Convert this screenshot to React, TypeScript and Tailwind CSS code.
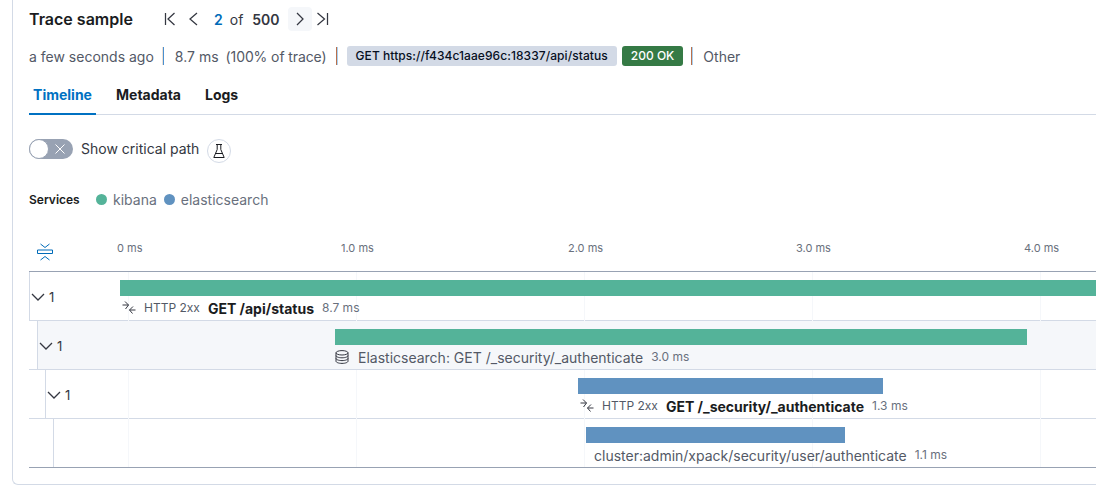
const gridLines = ["left-[99px]", "left-[327px]", "left-[555px]", "left-[783px]", "left-[1011px]"];

const ticks = [
  { label: "0 ms", className: "left-[88px]" },
  { label: "1.0 ms", className: "left-[312px]" },
  { label: "2.0 ms", className: "left-[539px]" },
  { label: "3.0 ms", className: "left-[767px]" },
  { label: "4.0 ms", className: "left-[995px]" },
];

function Icon({ children, className }: { children: React.ReactNode; className?: string }) {
  return (
    <svg viewBox="0 0 16 16" fill="none" stroke="currentColor" strokeWidth="1.25" className={className}>
      {children}
    </svg>
  );
}

function Chevron() {
  return (
    <svg viewBox="0 0 16 10" fill="none" stroke="#343741" strokeWidth="1.3" className="h-[10px] w-[16px] shrink-0">
      <path d="M2 2l6 6 6-6" />
    </svg>
  );
}

function ExitIcon() {
  return (
    <svg viewBox="0 0 14 14" fill="none" stroke="#343741" strokeWidth="1" className="h-[14px] w-[14px] shrink-0">
      <path d="M0.5 4H6.5M3 0.5L6.5 4L3.5 8M13.5 9H7.5M11 5.5L7.5 9L10.5 12.5" />
    </svg>
  );
}

function DatabaseIcon() {
  return (
    <svg viewBox="0 0 14 14" fill="none" stroke="#343741" strokeWidth="1" className="h-[14px] w-[14px] shrink-0">
      <ellipse cx="7" cy="2.8" rx="6" ry="2.2" />
      <path d="M1 2.8v8.4c0 1.2 2.7 2.2 6 2.2s6-1 6-2.2V2.8M1 5.6c0 1.2 2.7 2.2 6 2.2s6-1 6-2.2M1 8.4c0 1.2 2.7 2.2 6 2.2s6-1 6-2.2" />
    </svg>
  );
}

function Row({
  indent,
  tint,
  count,
  barClass,
  children,
}: {
  indent: string;
  tint?: boolean;
  count?: boolean;
  barClass: string;
  children: React.ReactNode;
}) {
  return (
    <div className={`h-[49px] border-b border-[#d3dae6] ${indent}`}>
      <div className={`flex h-full border-l border-[#d3dae6] ${tint ? "bg-[#f5f7fa]" : ""}`}>
        <div className="relative z-10 min-w-0 flex-1">
          {count && (
            <div className="absolute left-0 top-[17px] flex items-center gap-[3px] text-[13px] leading-[16px] text-[#343741]">
              <Chevron />
              <span>1</span>
            </div>
          )}
          <div className={`mt-[8px] h-[16px] ${barClass}`} />
          {children}
        </div>
      </div>
    </div>
  );
}

export default function App() {
  return (
    <div className="h-[489px] w-[1096px] overflow-hidden bg-white font-['Inter','Liberation_Sans',sans-serif] text-[#343741]">
      <div className="ml-[12px] h-[485px] w-[1200px] rounded-bl-[6px] border-b border-l border-[#d3dae6] pl-[16px]">
        <div className="flex h-[38px] items-center">
          <h2 className="w-[135px] text-[16px] font-semibold text-[#1a1c21]">Trace sample</h2>
          <div className="flex items-center">
            <Icon className="h-[16px] w-[16px] text-[#343741]">
              <path d="M1.5 2v12M10.5 2L4 8l6.5 6" />
            </Icon>
            <Icon className="ml-[8px] h-[16px] w-[16px] text-[#343741]">
              <path d="M9 2L2 8l7 6" />
            </Icon>
            <span className="ml-[10px] text-[14px] font-semibold text-[#006bb8]">2</span>
            <span className="ml-[7px] text-[14px] text-[#343741]">of</span>
            <span className="ml-[9px] text-[14px] font-semibold text-[#343741]">500</span>
            <div className="ml-[8px] flex h-[24px] w-[24px] items-center justify-center rounded-[4px] bg-[#f5f7fa]">
              <Icon className="h-[16px] w-[16px] text-[#343741]">
                <path d="M5 2l6 6-6 6" />
              </Icon>
            </div>
            <Icon className="ml-[3px] h-[16px] w-[16px] text-[#343741]">
              <path d="M12.5 2v12M2.5 2l7 6-7 6" />
            </Icon>
          </div>
        </div>

        <div className="mt-[7px] flex h-[22px] items-center text-[14px] text-[#535966]">
          <span>a few seconds ago</span>
          <div className="ml-[8px] mr-[11px] h-[18px] w-[2px] border-l border-r border-l-[#eee0d4] border-r-[#4a90d0]" />
          <span>8.7 ms</span>
          <span className="ml-[7px] tracking-[-0.1px]">(100% of trace)</span>
          <div className="mx-[9px] h-[18px] w-[2px] border-l border-r border-l-[#b9704c] border-r-[#a8d0f0]" />
          <span className="rounded-[3px] bg-[#d3dae6] px-[9px] text-[12px] font-medium leading-[20px] tracking-[0.07px] text-[#07101f]">
            GET https://f434c1aae96c:18337/api/status
          </span>
          <span className="ml-[5px] rounded-[3px] bg-[#357a45] px-[9px] text-[12px] font-medium leading-[20px] text-white">
            200 OK
          </span>
          <div className="ml-[8px] mr-[10px] h-[18px] w-[2px] border-l border-r border-l-[#b9704c] border-r-[#a8d0f0]" />
          <span>Other</span>
        </div>

        <div className="mt-[8px] flex h-[40px] w-[1067px] border-b border-[#d3dae6] text-[14px] font-bold text-[#1a1c21]">
          <span className="flex h-[40px] w-[67px] items-center justify-center border-b-2 border-[#0071c2] text-[#0071c2]">
            Timeline
          </span>
          <span className="ml-[20px] flex h-[39px] items-center">Metadata</span>
          <span className="ml-[24px] flex h-[39px] items-center">Logs</span>
        </div>

        <div className="mt-[24px] flex h-[24px] items-start">
          <div className="flex h-[20px] w-[44px] items-center justify-between rounded-full bg-[#98a2b3]">
            <div className="h-[20px] w-[20px] rounded-full border border-[#98a2b3] bg-white" />
            <svg viewBox="0 0 10 10" fill="none" stroke="#fff" strokeWidth="1" className="mr-[8px] h-[10px] w-[10px]">
              <path d="M0.5 0.5l9 9M9.5 0.5l-9 9" />
            </svg>
          </div>
          <span className="ml-[8px] text-[14px] leading-[20px] text-[#343741]">Show critical path</span>
          <div className="ml-[8px] flex h-[24px] w-[24px] items-center justify-center rounded-full border border-[#d3dae6]">
            <svg viewBox="0 0 16 16" fill="none" stroke="#1a1c21" strokeWidth="1" className="h-[16px] w-[16px]">
              <path d="M5 1.5h6M6.2 1.5v5L2.8 14.5h10.4L9.8 6.5v-5M4.8 10.5h6.4" />
            </svg>
          </div>
        </div>

        <div className="mt-[24px] flex h-[24px] items-center text-[14px] text-[#69707d]">
          <span className="w-[67px] pt-[1px] text-[12px] font-semibold text-[#1a1c21]">Services</span>
          <div className="h-[11px] w-[11px] rounded-full bg-[#54b399]" />
          <span className="ml-[6px]">kibana</span>
          <div className="ml-[7px] h-[11px] w-[11px] rounded-full bg-[#6092c0]" />
          <span className="ml-[6px]">elasticsearch</span>
        </div>

        <div className="relative w-[1067px]">
          <div className="mt-[13px] flex h-[47px] pl-[8px] pt-[19px]">
            <svg viewBox="0 0 16 18" fill="none" stroke="#006bb8" strokeWidth="1" className="h-[18px] w-[16px]">
              <path d="M3.5 1l4.5 3.5L12.5 1M0.5 7h15v3.5H0.5zM3.5 17l4.5-3.5 4.5 3.5" />
            </svg>
          </div>
          {ticks.map((tick) => (
            <span key={tick.label} className={`absolute top-[16px] text-[11px] text-[#69707d] ${tick.className}`}>
              {tick.label}
            </span>
          ))}

          <div className="relative border-b border-t border-b-[#98a2b3] border-t-[#98a2b3]">
            {gridLines.map((line) => (
              <div key={line} className={`absolute bottom-0 top-0 w-px bg-[#f5f7fa] ${line}`} />
            ))}

            <Row indent="pl-0 [&>div]:pl-0" count barClass="ml-[90px] w-[1000px] bg-[#54b399]">
              <div className="ml-[92px] mt-[2px] flex h-[20px] items-center whitespace-nowrap text-[12px] text-[#535966]">
                <ExitIcon />
                <span className="ml-[8px]">HTTP 2xx</span>
                <span className="ml-[8px] text-[14px] font-bold text-[#1a1c21]">GET /api/status</span>
                <span className="ml-[8px] text-[12px] text-[#69707d]">8.7 ms</span>
              </div>
            </Row>

            <div className="relative">
              <Row indent="pl-[8px]" tint count barClass="ml-[297px] w-[692px] bg-[#54b399]">
                <div className="ml-[297px] mt-[2px] flex h-[20px] items-center whitespace-nowrap text-[14px] text-[#535966]">
                  <DatabaseIcon />
                  <span className="ml-[9px]">Elasticsearch: GET /_security/_authenticate</span>
                  <span className="ml-[8px] text-[12px] text-[#69707d]">3.0 ms</span>
                </div>
              </Row>
            </div>

            <Row indent="pl-[16px]" count barClass="ml-[532px] w-[305px] bg-[#6092c0]">
              <div className="ml-[534px] mt-[2px] flex h-[20px] items-center whitespace-nowrap text-[12px] text-[#535966]">
                <ExitIcon />
                <span className="ml-[8px]">HTTP 2xx</span>
                <span className="ml-[8px] text-[14px] font-bold text-[#1a1c21]">GET /_security/_authenticate</span>
                <span className="ml-[8px] text-[12px] text-[#69707d]">1.3 ms</span>
              </div>
            </Row>

            <Row indent="pl-[24px] !border-b-0 !h-[48px]" barClass="ml-[532px] w-[259px] bg-[#6092c0]">
              <div className="ml-[540px] mt-[2px] flex h-[20px] items-center whitespace-nowrap text-[14px] text-[#535966]">
                <span>cluster:admin/xpack/security/user/authenticate</span>
                <span className="ml-[8px] text-[12px] text-[#69707d]">1.1 ms</span>
              </div>
            </Row>
          </div>
        </div>
      </div>
    </div>
  );
}
